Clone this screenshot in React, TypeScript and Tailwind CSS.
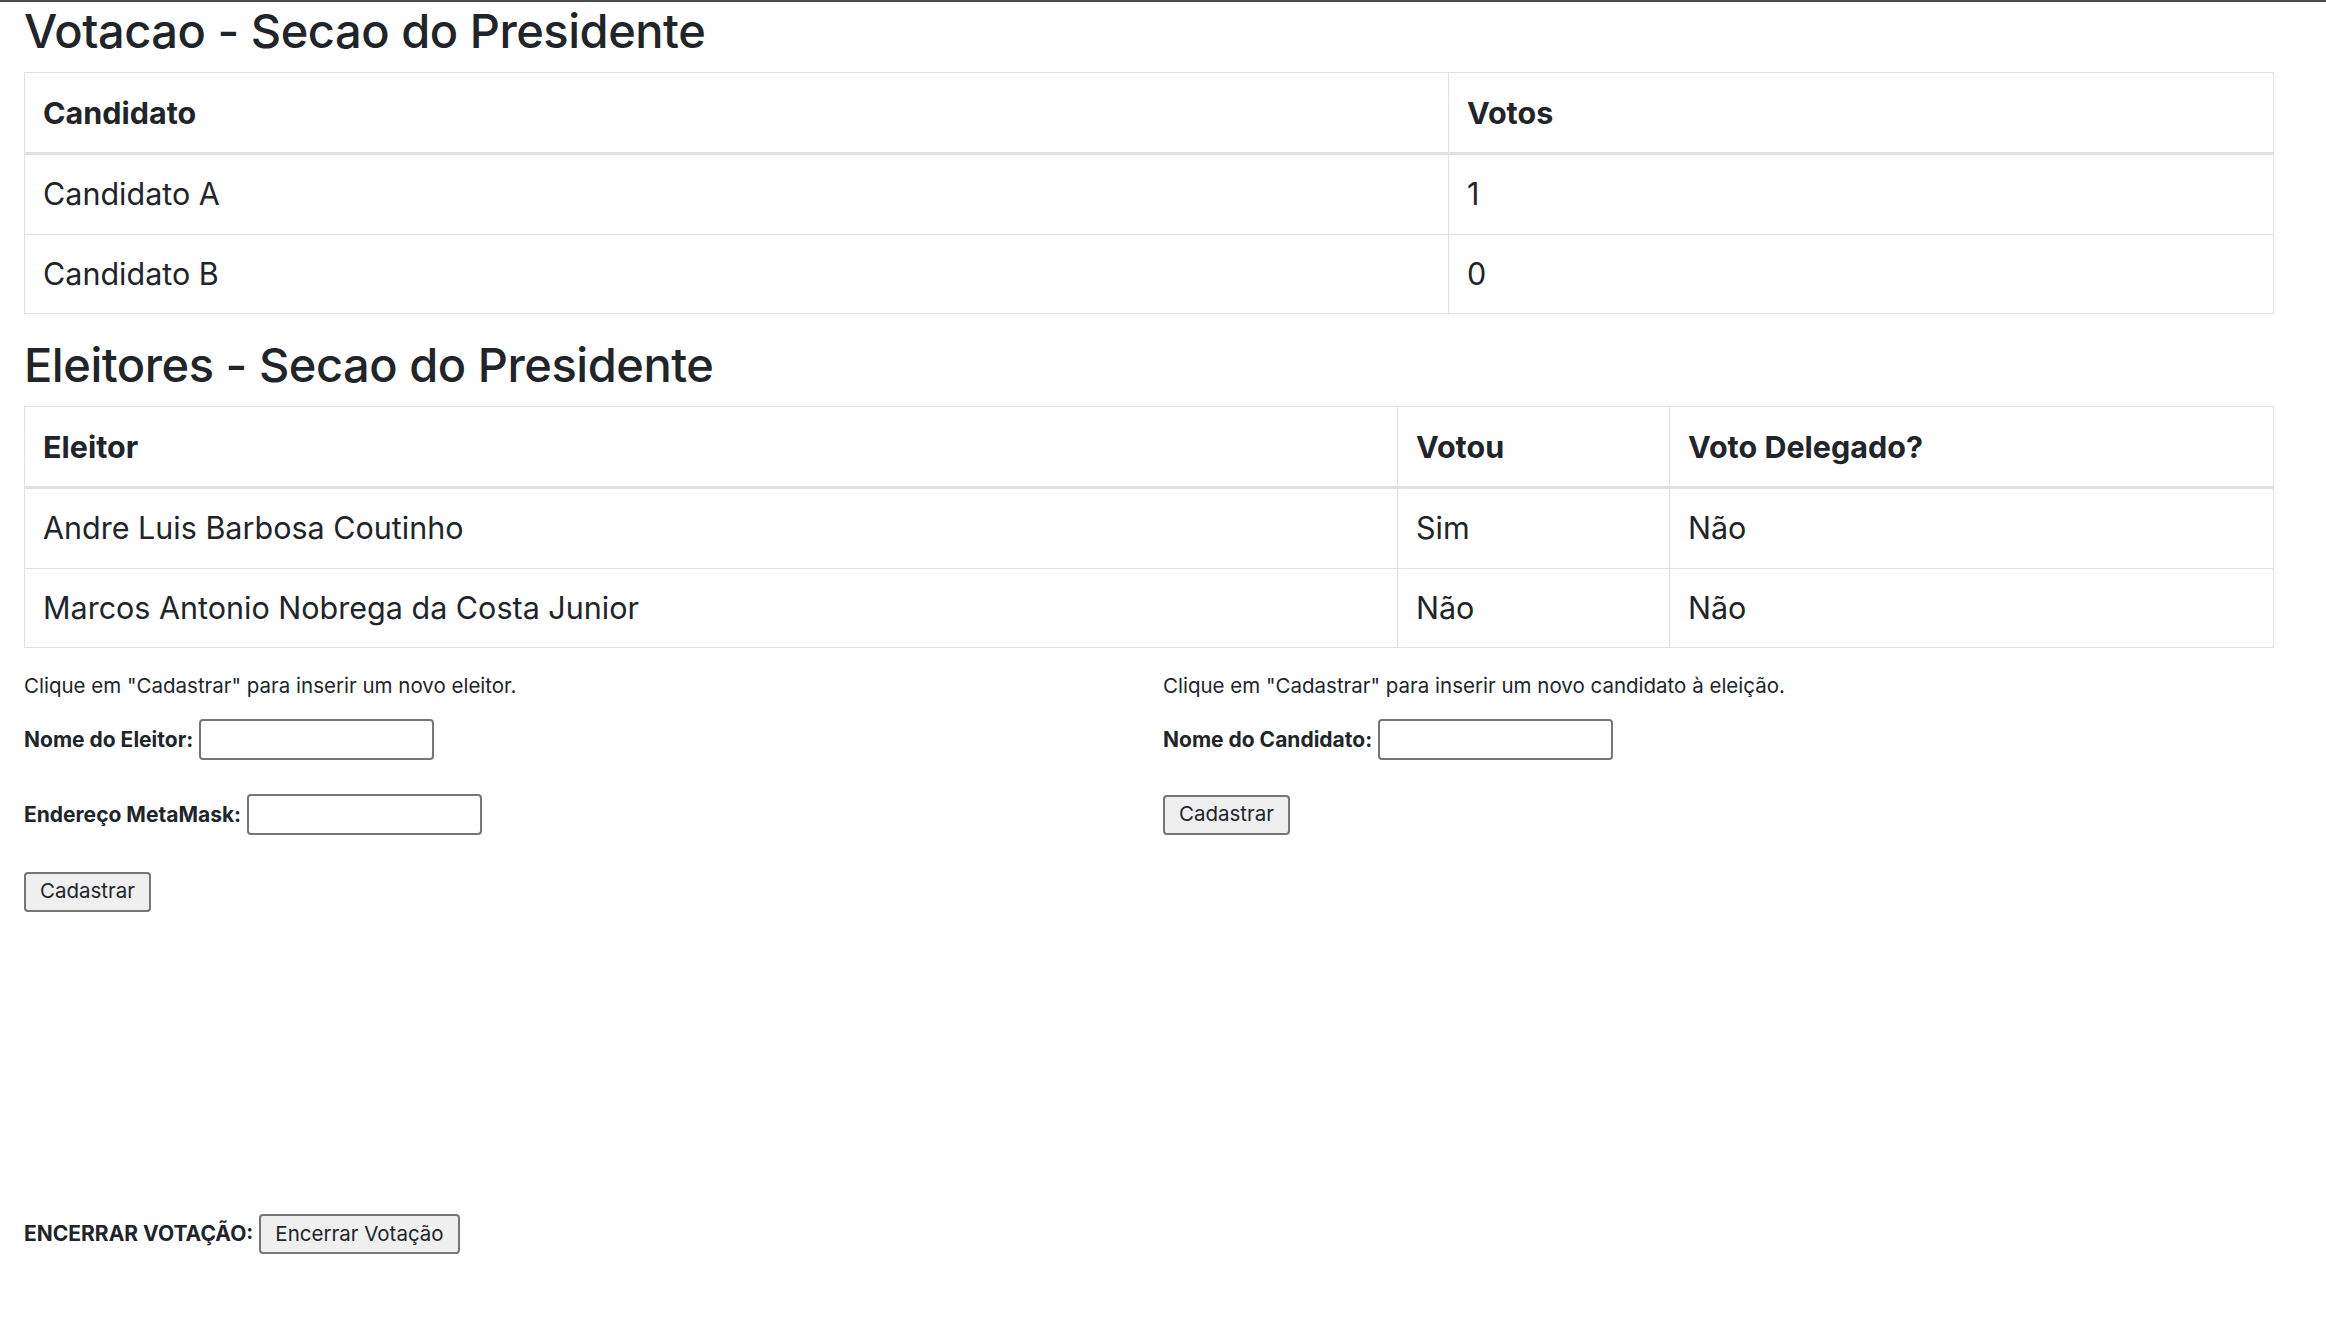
import { FC } from "react";

interface Eleitor {
  nome: string;
  votou: string;
  delegado: string;
}

const candidatos = [
  { nome: "Candidato A", votos: 1 },
  { nome: "Candidato B", votos: 0 },
];

const eleitores: Eleitor[] = [
  { nome: "Andre Luis Barbosa Coutinho", votou: "Sim", delegado: "Não" },
  { nome: "Marcos Antonio Nobrega da Costa Junior", votou: "Não", delegado: "Não" },
];

const thClass =
  "border border-[#dee2e6] border-b-[3px] px-[18px] py-[19px] text-left font-bold text-[30.5px] leading-[41px]";
const tdClass =
  "border border-[#dee2e6] px-[18px] py-[19px] text-left font-normal text-[30.5px] leading-[40.5px]";

const inputClass =
  "h-[41px] w-[235px] border-2 border-[#767676] rounded-[4px] bg-white px-2 text-[20px]";
const buttonClass =
  "h-[40px] border-2 border-[#767676] rounded-[4px] bg-[#efefef] px-[14px] text-[20.5px] text-[#212529]";

const App: FC = () => {
  return (
    <div className="min-h-screen bg-white border-t-2 border-[#4b4b4b] font-['Inter',sans-serif] text-[#212529]">
      <div className="pl-[24px] pr-[52px]">
        <h2 className="text-[47px] font-medium leading-[58px] tracking-[-0.01em] mb-[12px]">
          Votacao - Secao do Presidente
        </h2>
        <table className="w-full table-fixed border-collapse mb-[22px]">
          <thead>
            <tr>
              <th className={`${thClass} w-[1424px]`}>Candidato</th>
              <th className={thClass}>Votos</th>
            </tr>
          </thead>
          <tbody>
            {candidatos.map((c) => (
              <tr key={c.nome}>
                <td className={tdClass}>{c.nome}</td>
                <td className={tdClass}>{c.votos}</td>
              </tr>
            ))}
          </tbody>
        </table>

        <h2 className="text-[47px] font-medium leading-[58px] tracking-[-0.01em] mb-[12px]">
          Eleitores - Secao do Presidente
        </h2>
        <table className="w-full table-fixed border-collapse mb-[24px]">
          <thead>
            <tr>
              <th className={`${thClass} w-[1373px]`}>Eleitor</th>
              <th className={`${thClass} w-[272px]`}>Votou</th>
              <th className={thClass}>Voto Delegado?</th>
            </tr>
          </thead>
          <tbody>
            {eleitores.map((e) => (
              <tr key={e.nome}>
                <td className={tdClass}>{e.nome}</td>
                <td className={tdClass}>{e.votou}</td>
                <td className={tdClass}>{e.delegado}</td>
              </tr>
            ))}
          </tbody>
        </table>
      </div>

      <div className="grid grid-cols-2 px-[24px] text-[20.5px]">
        <div>
          <p className="leading-[27px]">
            Clique em "Cadastrar" para inserir um novo eleitor.
          </p>
          <div className="mt-[18px] flex h-[45px] items-center gap-[6px]">
            <label className="font-bold text-[21px]">Nome do Eleitor:</label>
            <input type="text" className={inputClass} />
          </div>
          <div className="mt-[30px] flex h-[45px] items-center gap-[6px]">
            <label className="font-bold text-[21px]">Endereço MetaMask:</label>
            <input type="text" className={inputClass} />
          </div>
          <div className="mt-[32px] flex h-[45px] items-center">
            <button className={buttonClass}>Cadastrar</button>
          </div>
        </div>
        <div>
          <p className="leading-[27px]">
            Clique em "Cadastrar" para inserir um novo candidato à eleição.
          </p>
          <div className="mt-[18px] flex h-[45px] items-center gap-[6px]">
            <label className="font-bold text-[21px]">Nome do Candidato:</label>
            <input type="text" className={inputClass} />
          </div>
          <div className="mt-[30px] flex h-[45px] items-center">
            <button className={buttonClass}>Cadastrar</button>
          </div>
        </div>
      </div>

      <div className="mt-[300px] flex items-center gap-[6px] px-[24px]">
        <span className="font-bold text-[21px]">ENCERRAR VOTAÇÃO:</span>
        <button className={buttonClass}>Encerrar Votação</button>
      </div>
    </div>
  );
};

export default App;
